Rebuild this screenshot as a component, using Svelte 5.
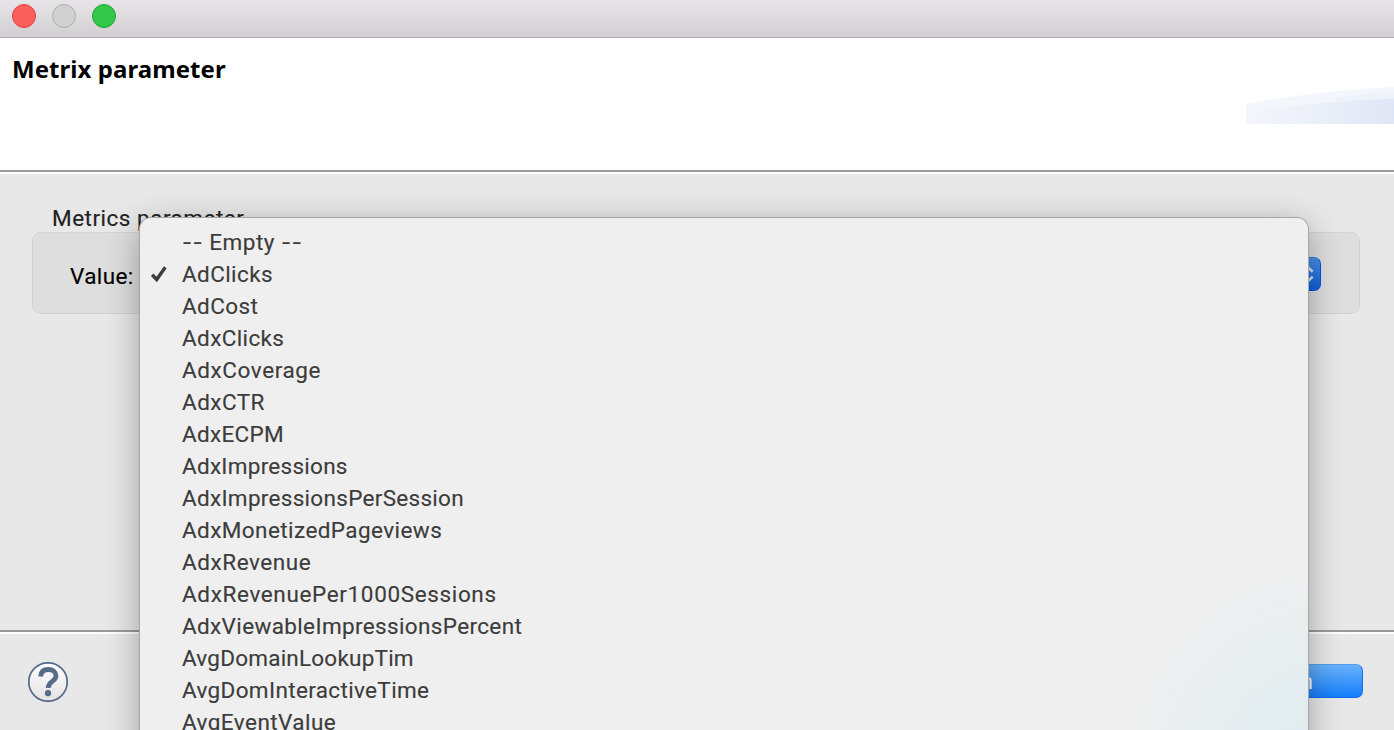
<script>
  const options = [
    { name: '-- Empty --', tracking: 0.5 },
    { name: 'AdClicks', tracking: 0.4 },
    { name: 'AdCost', tracking: 0.4 },
    { name: 'AdxClicks', tracking: 0.38 },
    { name: 'AdxCoverage', tracking: 0.6 },
    { name: 'AdxCTR', tracking: 0.45 },
    { name: 'AdxECPM', tracking: 0.3 },
    { name: 'AdxImpressions', tracking: 0.27 },
    { name: 'AdxImpressionsPerSession', tracking: 0.3 },
    { name: 'AdxMonetizedPageviews', tracking: 0.42 },
    { name: 'AdxRevenue', tracking: 0.56 },
    { name: 'AdxRevenuePer1000Sessions', tracking: 0.64 },
    { name: 'AdxViewableImpressionsPercent', tracking: 0.36 },
    { name: 'AvgDomainLookupTim', tracking: 0.22 },
    { name: 'AvgDomInteractiveTime', tracking: 0.35 },
    { name: 'AvgEventValue', tracking: 0.45 }
  ];
  const selected = 'AdClicks';
  const parts = (name) => name.split(/(--)/).filter(Boolean);
</script>

<div class="window">
  <div class="titlebar">
    <span class="light close"></span>
    <span class="light minimize"></span>
    <span class="light zoom"></span>
  </div>

  <header>
    <h1>Metrix parameter</h1>
    <svg class="banner" width="148" height="38" viewBox="0 0 148 38">
      <defs>
        <linearGradient id="sweep" x1="0" x2="1" y1="0" y2="0">
          <stop offset="0" stop-color="#f3f6fb" />
          <stop offset="0.55" stop-color="#eaeef8" />
          <stop offset="1" stop-color="#dfe6f5" />
        </linearGradient>
      </defs>
      <path d="M0 18Q68 5 148 1V38H0Z" fill="#f3f7fc" />
      <path d="M90 12Q120 8 148 5V20H90Z" fill="#edf2fb" />
      <path d="M0 25.500Q70 16 148 12.500V38H0Z" fill="url(#sweep)" />
    </svg>
  </header>

  <main>
    <div class="legend">Metrics parameter</div>
    <div class="group">
      <label for="value">Value:</label>
      <button id="value" class="combo" aria-label="Value">
        <svg width="26" height="34" viewBox="0 0 26 34">
          <path d="M6.500 14.800L12.500 8.800L18.700 14.800M6.500 19.600L12.500 25.600L18.700 19.600" fill="none" stroke="#d5e2f5" stroke-width="2.600" />
        </svg>
      </button>
    </div>
  </main>

  <footer>
    <svg width="40" height="40" viewBox="0 0 40 40">
      <defs>
        <linearGradient id="disc" x1="0" x2="0" y1="0" y2="1">
          <stop offset="0" stop-color="#fff" />
          <stop offset="1" stop-color="#e3e3e3" />
        </linearGradient>
      </defs>
      <circle cx="20" cy="20" r="19.200" fill="url(#disc)" stroke="#566a8b" stroke-width="1.700" />
      <path d="M12.500 14.600C13 9.700 16 7.500 20.200 7.500C25 7.500 28 10.200 28 14C28 19.500 20.200 18.800 20.200 26" fill="none" stroke="#566a8b" stroke-width="4.800" />
      <circle cx="20" cy="31.200" r="3.100" fill="#566a8b" />
    </svg>
    <button class="finish">Finish</button>
  </footer>

  <ul class="menu">
    {#each options as option}
      <li>
        <span class="mark">
          {#if option.name === selected}
            <svg width="18" height="18" viewBox="0 0 18 18">
              <path d="M2.200 9.800L6.700 14.500L15.300 2.300" fill="none" stroke="#3c3c3c" stroke-width="3.400" />
            </svg>
          {/if}
        </span>
        <span class="name" style:letter-spacing="{option.tracking}px">{#each parts(option.name) as part}<span class:dash={part === '--'}>{part}</span>{/each}</span>
      </li>
    {/each}
  </ul>
</div>

<style>
  :global(body) { margin: 0; overflow: hidden; }
  .window {
    position: relative; display: flex; flex-direction: column; box-sizing: border-box;
    width: 1394px; height: 730px; overflow: hidden; background: #e8e8e8;
    font-family: Roboto, "Liberation Sans", sans-serif; font-size: 22.500px; letter-spacing: .4px;
  }
  .titlebar {
    display: flex; gap: 16px; box-sizing: border-box; height: 38px; flex: none;
    padding: 4px 12px; border-bottom: 1px solid #acaaac;
    background: linear-gradient(#e7e5e7, #d1cfd1);
  }
  .light { box-sizing: border-box; width: 24px; height: 24px; border-radius: 50%; border: 1px solid; }
  .close { background: #fc605c; border-color: #e2413f; }
  .minimize { background: #d0d0d0; border-color: #b2b0b2; }
  .zoom { background: #34c84a; border-color: #20a732; }
  header {
    display: flex; justify-content: space-between; align-items: flex-start; box-sizing: border-box;
    height: 134px; flex: none; background: #fff; border-bottom: 2px solid #999;
  }
  h1 {
    margin: 14px 0 0 12px; font: bold 24px/34px "Noto Sans", sans-serif; letter-spacing: .06px; color: #000;
  }
  .banner { margin-top: 48px; }
  main {
    box-sizing: border-box; height: 460px; flex: none; padding: 30px 34px 0 32px;
    border-top: 2px solid #fff; border-bottom: 2px solid #999;
  }
  .legend { height: 28px; line-height: 28px; padding-left: 20px; color: #222; letter-spacing: .5px; -webkit-text-stroke: .15px; }
  .group {
    display: flex; justify-content: space-between; align-items: center; box-sizing: border-box;
    height: 82px; padding: 2px 38px 0 37px; color: #000;
    background: #dedede; border: 1px solid #d3d3d3; border-radius: 9px;
  }
  .group label { padding-top: 3px; -webkit-text-stroke: .15px; }
  .combo {
    display: flex; justify-content: flex-end; align-items: center; width: 1180px; height: 34px; padding: 0;
    border: 1px solid #0c50e0; border-top-color: #347be4; border-radius: 7px; box-sizing: border-box;
    background: linear-gradient(#4a90ee, #0d5fd8);
  }
  .combo svg { flex: none; }
  footer {
    display: flex; justify-content: space-between; align-items: center; box-sizing: border-box;
    flex: 1; padding: 0 31px 0 28px; border-top: 2px solid #fff;
  }
  .finish {
    width: 150px; height: 34px; margin-bottom: 2px; padding: 0 10px 0 0; border: 1px solid #1668f6; border-top-color: #539fee;
    border-radius: 7px; background: linear-gradient(#69b2fa, #147efb); color: #fff;
    font: inherit; box-sizing: border-box;
  }
  .menu {
    position: absolute; left: 140px; top: 218px; width: 1168px; height: 560px;
    box-sizing: border-box; margin: 0; padding: 8px 0 0; list-style: none; color: #3c3c3c;
    border-radius: 11px; box-shadow: 0 0 0 1px #a6a6a6, 0 8px 34px rgba(0, 0, 0, .34);
    background: radial-gradient(ellipse 200px 210px at 1180px 555px, #dcebee, #e4edef 45%, #efefef) #efefef;
  }
  li { display: flex; height: 32px; line-height: 32px; white-space: nowrap; }
  .mark { display: flex; align-items: center; box-sizing: border-box; width: 42px; padding-left: 10px; }
  .name { white-space: pre; -webkit-text-stroke: .15px; }
  .dash { font-family: Inter, sans-serif; font-size: 22px; }
</style>
